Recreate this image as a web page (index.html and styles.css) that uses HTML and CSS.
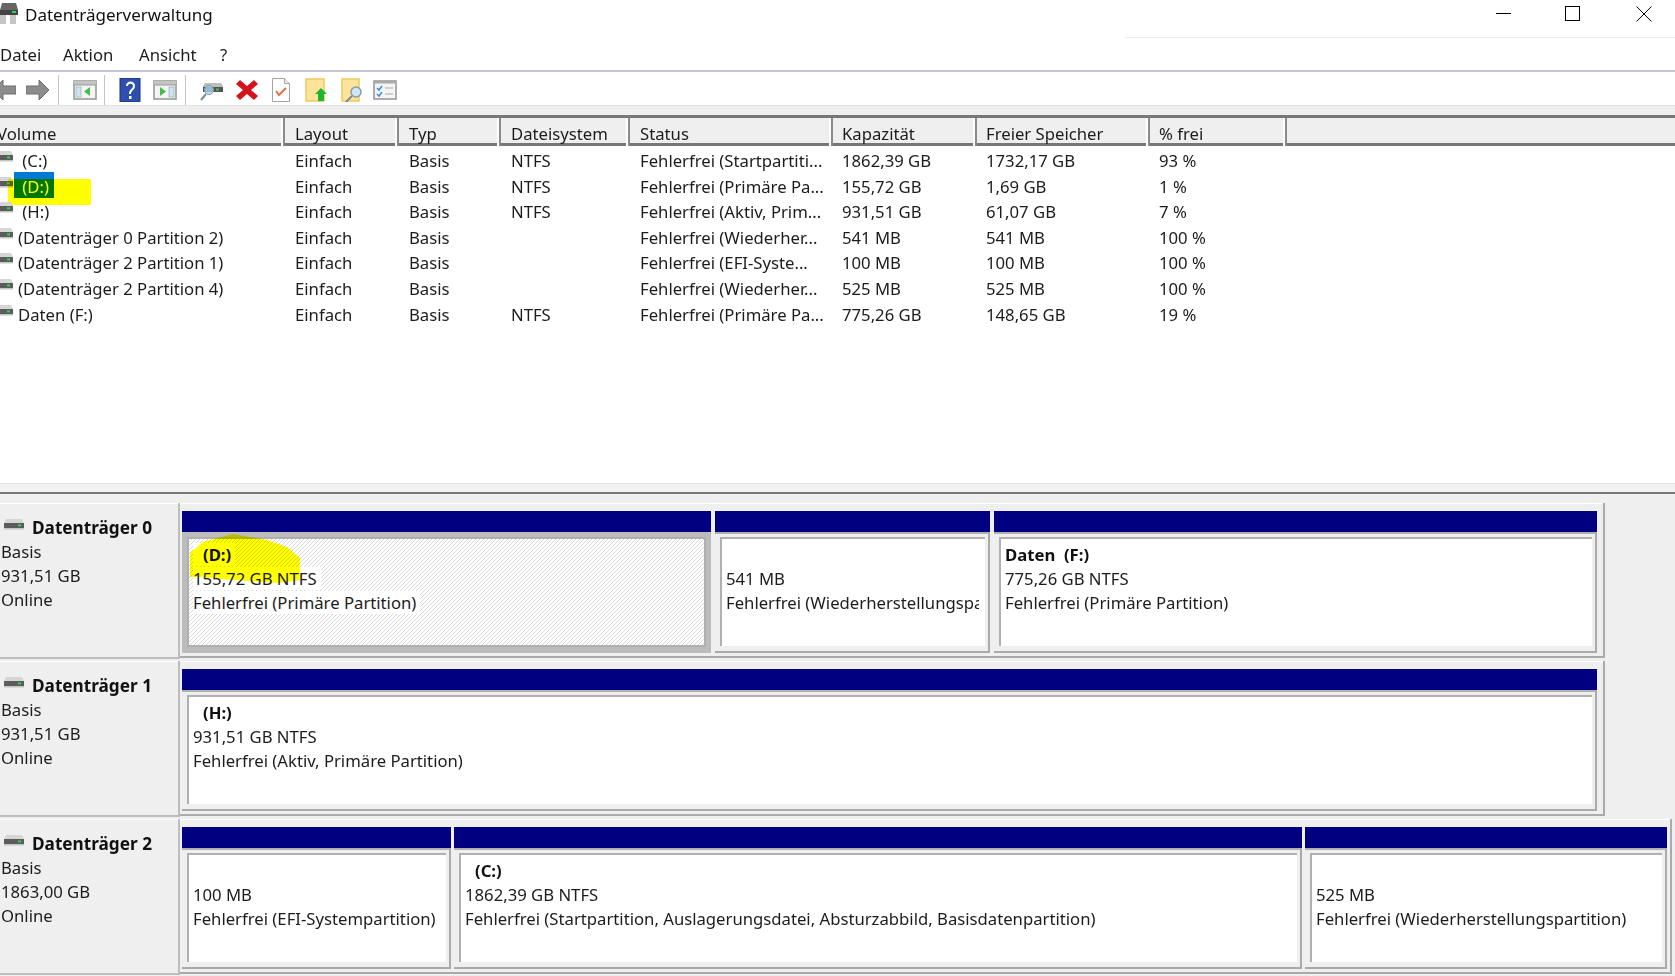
FILE: index.html
```html
<!DOCTYPE html>
<html lang="de">
<head>
<meta charset="utf-8">
<title>Datenträgerverwaltung</title>
<link rel="stylesheet" href="styles.css">
</head>
<body>
<svg class="defs" width="0" height="0">
  <symbol id="drive" viewBox="0 0 20 11">
    <path d="M2 0h16l2 4H0z" fill="#d6d6d6"/>
    <rect x="0" y="4" width="20" height="5" fill="#5c5c5c"/>
    <rect x="0" y="9" width="20" height="1.5" fill="#c4c4c4"/>
    <rect x="14" y="5.4" width="3" height="2" fill="#35d04a"/>
  </symbol>
  <symbol id="panel" viewBox="0 0 24 20">
    <rect x="1" y="1" width="22" height="18" fill="#f4f4f4" stroke="#9a9a9a" stroke-width="1.6"/>
    <rect x="1" y="1" width="22" height="4" fill="#c4c4c4"/>
    <path d="M1 5h22" stroke="#9a9a9a"/>
  </symbol>
</svg>

<header class="titlebar">
  <svg class="app-icon" viewBox="0 0 18 21"><path d="M2 0h14l2 7H0z" fill="#666"/><rect y="7" width="18" height="5" fill="#444"/><rect x="12" y="8" width="4" height="2" fill="#35d04a"/><rect y="12" width="6" height="9" fill="#c4c4c4"/><rect x="10" y="12" width="6" height="9" fill="#c4c4c4"/></svg>
  <span class="title">Datenträgerverwaltung</span>
  <div class="winctl">
    <svg viewBox="0 0 16 16"><path d="M0 7.5h15" stroke="#000" fill="none"/></svg>
    <svg viewBox="0 0 16 16"><rect x=".5" y=".5" width="14" height="14" stroke="#000" fill="none"/></svg>
    <svg viewBox="0 0 16 16"><path d="M.5.5l15 15M15.500.5l-15 15" stroke="#000" fill="none"/></svg>
  </div>
</header>

<nav class="menubar">
  <span>Datei</span><span>Aktion</span><span>Ansicht</span><span>?</span>
</nav>

<div class="toolbar">
  <svg viewBox="0 0 24 22"><path d="M11 1L1 11l10 10v-6h13V7H11z" fill="#8c8c8c" stroke="#6e6e6e"/></svg>
  <svg viewBox="0 0 24 22"><path d="M13 1l10 10-10 10v-6H0V7h13z" fill="#8c8c8c" stroke="#6e6e6e"/></svg>
  <i class="sep"></i>
  <svg viewBox="0 0 24 20"><use href="#panel"/><rect x="3" y="7" width="5" height="10" fill="#cfe0f2" stroke="#8aa" stroke-width=".6"/><path d="M17 7v9l-6-4.500z" fill="#3fbf4f"/></svg>
  <i class="sep"></i>
  <svg viewBox="0 0 24 24"><rect x="2" y="0" width="20" height="24" fill="#2f4fae"/><rect x="2" y="0" width="20" height="24" fill="none" stroke="#1c2f80"/><path d="M8 8c0-6 9-6 9 0 0 4-4 4-4 8h-2c0-5 4-5 4-8 0-3-5-3-5 0z" fill="#fff"/><rect x="11" y="18" width="2.500" height="3" fill="#fff"/></svg>
  <svg viewBox="0 0 24 20"><use href="#panel"/><rect x="16" y="7" width="5" height="10" fill="#cfe0f2" stroke="#8aa" stroke-width=".6"/><path d="M7 7v9l6-4.500z" fill="#3fbf4f"/></svg>
  <i class="sep"></i>
  <svg viewBox="0 0 24 22"><path d="M5 4h16l2 3v6H3V7z" fill="#bdbdbd"/><rect x="3" y="8" width="20" height="5" fill="#555"/><rect x="16" y="9.500" width="3" height="2" fill="#35d04a"/><circle cx="9" cy="11" r="4.500" fill="#a9d3ef" fill-opacity=".8" stroke="#8a9aa5"/><path d="M6 15l-5 6" stroke="#7a8a9a" stroke-width="2"/></svg>
  <svg viewBox="0 0 24 22"><path d="M5 1l7 6 7-6 4 4-7 6 7 6-4 4-7-6-7 6-4-4 7-6-7-6z" fill="#d3121c"/></svg>
  <svg viewBox="0 0 24 24"><path d="M3.500.5h12l5 5v18h-17z" fill="#fff" stroke="#a4a4a4"/><path d="M15.500.5v5h5" fill="#eee" stroke="#a4a4a4"/><path d="M7 13l3 4 7-7" fill="none" stroke="#e8703a" stroke-width="2"/></svg>
  <svg viewBox="0 0 24 24"><rect x="2" y="1" width="18" height="22" fill="#fde49a" stroke="#eec95c" stroke-width="1.500"/><path d="M17 10l6 6h-3v7h-6v-7h-3z" fill="#1fb52e"/></svg>
  <svg viewBox="0 0 24 24"><rect x="2" y="1" width="17" height="22" fill="#fde49a" stroke="#eec95c" stroke-width="1.500"/><circle cx="16" cy="14" r="5" fill="#cfe6f5" stroke="#8a9aa5" stroke-width="1.500"/><path d="M12 18l-6 6" stroke="#7a8a9a" stroke-width="2"/></svg>
  <svg viewBox="0 0 24 20"><rect x="1" y="1" width="22" height="18" fill="#f4f4f4" stroke="#9a9a9a" stroke-width="1.600"/><rect x="1" y="1" width="22" height="2.500" fill="#aaa"/><path d="M4 8l2 2 3-4M4 14l2 2 3-4" fill="none" stroke="#3a8fe0" stroke-width="1.500"/><path d="M12 8h8M12 14h8" stroke="#aaa"/></svg>
</div>
<div class="toolgap"></div>

<section class="list">
  <div class="cols head">
    <span class="first">Volume</span><span>Layout</span><span>Typ</span><span>Dateisystem</span><span>Status</span><span>Kapazität</span><span>Freier Speicher</span><span>% frei</span>
  </div>
  <div class="cols row">
    <span class="vol"><svg class="lv-icon"><use href="#drive"/></svg><b class="name"> (C:)</b></span><span>Einfach</span><span>Basis</span><span>NTFS</span><span>Fehlerfrei (Startpartiti...</span><span>1862,39 GB</span><span>1732,17 GB</span><span>93 %</span>
  </div>
  <div class="cols row">
    <span class="vol"><svg class="lv-icon"><use href="#drive"/></svg><b class="name selected"> (D:)</b></span><span>Einfach</span><span>Basis</span><span>NTFS</span><span>Fehlerfrei (Primäre Pa...</span><span>155,72 GB</span><span>1,69 GB</span><span>1 %</span>
    <i class="marker-rect"></i>
  </div>
  <div class="cols row">
    <span class="vol"><svg class="lv-icon"><use href="#drive"/></svg><b class="name"> (H:)</b></span><span>Einfach</span><span>Basis</span><span>NTFS</span><span>Fehlerfrei (Aktiv, Prim...</span><span>931,51 GB</span><span>61,07 GB</span><span>7 %</span>
  </div>
  <div class="cols row">
    <span class="vol"><svg class="lv-icon"><use href="#drive"/></svg><b class="name">(Datenträger 0 Partition 2)</b></span><span>Einfach</span><span>Basis</span><span></span><span>Fehlerfrei (Wiederher...</span><span>541 MB</span><span>541 MB</span><span>100 %</span>
  </div>
  <div class="cols row">
    <span class="vol"><svg class="lv-icon"><use href="#drive"/></svg><b class="name">(Datenträger 2 Partition 1)</b></span><span>Einfach</span><span>Basis</span><span></span><span>Fehlerfrei (EFI-Syste...</span><span>100 MB</span><span>100 MB</span><span>100 %</span>
  </div>
  <div class="cols row">
    <span class="vol"><svg class="lv-icon"><use href="#drive"/></svg><b class="name">(Datenträger 2 Partition 4)</b></span><span>Einfach</span><span>Basis</span><span></span><span>Fehlerfrei (Wiederher...</span><span>525 MB</span><span>525 MB</span><span>100 %</span>
  </div>
  <div class="cols row">
    <span class="vol"><svg class="lv-icon"><use href="#drive"/></svg><b class="name">Daten (F:)</b></span><span>Einfach</span><span>Basis</span><span>NTFS</span><span>Fehlerfrei (Primäre Pa...</span><span>775,26 GB</span><span>148,65 GB</span><span>19 %</span>
  </div>
</section>

<div class="splitter"></div>

<section class="disks">
  <article class="disk">
    <div class="label">
      <div class="label-name"><svg class="dk-icon"><use href="#drive"/></svg><strong>Datenträger 0</strong></div>
      <div>Basis</div><div>931,51 GB</div><div>Online</div>
    </div>
    <div class="frame">
      <div class="part w-d sel">
        <div class="bar"></div>
        <div class="body"><div class="inner hatch">
          <p><strong class="lead">(D:)</strong></p><p><span>155,72 GB NTFS</span></p><p><span>Fehlerfrei (Primäre Partition)</span></p>
        </div></div>
        <svg class="marker-brush" viewBox="0 0 112 52"><path d="M0 44V20L13 9 43 1 77 7 97 14 110 25V47L87 50 43 47 10 44z" fill="#ffff00"/></svg>
      </div>
      <div class="part w-rec">
        <div class="bar"></div>
        <div class="body"><div class="inner">
          <p>&nbsp;</p><p>541 MB</p><p>Fehlerfrei (Wiederherstellungspartition)</p>
        </div></div>
      </div>
      <div class="part grow">
        <div class="bar"></div>
        <div class="body"><div class="inner">
          <p><strong>Daten  (F:)</strong></p><p>775,26 GB NTFS</p><p>Fehlerfrei (Primäre Partition)</p>
        </div></div>
      </div>
    </div>
  </article>

  <article class="disk">
    <div class="label">
      <div class="label-name"><svg class="dk-icon"><use href="#drive"/></svg><strong>Datenträger 1</strong></div>
      <div>Basis</div><div>931,51 GB</div><div>Online</div>
    </div>
    <div class="frame">
      <div class="part grow">
        <div class="bar"></div>
        <div class="body"><div class="inner">
          <p><strong class="lead">(H:)</strong></p><p>931,51 GB NTFS</p><p>Fehlerfrei (Aktiv, Primäre Partition)</p>
        </div></div>
      </div>
    </div>
  </article>

  <article class="disk">
    <div class="label">
      <div class="label-name"><svg class="dk-icon"><use href="#drive"/></svg><strong>Datenträger 2</strong></div>
      <div>Basis</div><div>1863,00 GB</div><div>Online</div>
    </div>
    <div class="frame wide">
      <div class="part w-efi">
        <div class="bar"></div>
        <div class="body"><div class="inner">
          <p>&nbsp;</p><p>100 MB</p><p>Fehlerfrei (EFI-Systempartition)</p>
        </div></div>
      </div>
      <div class="part w-c">
        <div class="bar"></div>
        <div class="body"><div class="inner">
          <p><strong class="lead">(C:)</strong></p><p>1862,39 GB NTFS</p><p>Fehlerfrei (Startpartition, Auslagerungsdatei, Absturzabbild, Basisdatenpartition)</p>
        </div></div>
      </div>
      <div class="part grow">
        <div class="bar"></div>
        <div class="body"><div class="inner">
          <p>&nbsp;</p><p>525 MB</p><p>Fehlerfrei (Wiederherstellungspartition)</p>
        </div></div>
      </div>
    </div>
  </article>
</section>
</body>
</html>
```

FILE: styles.css
```css
* { box-sizing: border-box; }
html, body { margin: 0; height: 976px; overflow: hidden; }
body {
  background: #fff;
  color: #1c1c1c;
  font: 16.700px/24px "Noto Sans", "Open Sans", sans-serif;
  width: 1675px;
}
.defs { position: absolute; }

.titlebar {
  height: 37px;
  display: flex;
  align-items: flex-start;
}
.app-icon { width: 18px; height: 21px; margin-top: 3px; flex: none; }
.title { margin: 3px 0 0 7px; font-size: 17px; line-height: 24px; color: #111; }
.winctl {
  margin-left: auto;
  display: grid;
  grid-template-columns: 69px 71px 39px;
  padding-top: 6px;
  width: 179px;
  height: 37px;
}
.winctl svg { width: 16px; height: 16px; }

.menubar {
  height: 35px;
  display: flex;
  align-items: center;
  padding-top: 2px;
  border-top: 1px solid #fff;
  border-bottom: 2px solid #c3c6d0;
  position: relative;
}
.menubar::before {
  content: "";
  position: absolute;
  left: 1125px;
  right: 0;
  top: -1px;
  height: 1px;
  background: #ececec;
}
.menubar span:nth-child(1) { width: 63px; }
.menubar span:nth-child(2) { width: 76px; }
.menubar span:nth-child(3) { width: 81px; }

.toolbar {
  height: 33px;
  margin-left: -8px;
  padding-top: 2px;
  display: grid;
  grid-template-columns: 34px 32px 15px 31px 14px 35px 32px 15px 35px 34px 35px 36px 33px 24px;
  align-items: center;
  justify-items: start;
}
.toolbar svg { width: 24px; height: 24px; }
.sep { width: 1px; height: 30px; background: #c4c4c4; }
.toolgap { height: 10px; background: #efefef; border-top: 1px solid #e2e2e2; }

.list { height: 368px; }
.cols {
  display: grid;
  grid-template-columns: 285px 114px 102px 129px 203px 144px 173px 137px;
  position: relative;
}
.head {
  height: 31px;
  background: #efefef;
  border-top: 3px solid #777;
  border-bottom: 3px solid #777;
  line-height: 25px;
}
.head span {
  padding: 3px 0 0 10px;
  border-right: 2px solid #8a8a8a;
  box-shadow: inset -2px 0 0 #fff;
}
.head span.first { padding-left: 0; text-indent: -3px; }
.row { height: 25.600px; line-height: 25.600px; padding-top: 2px; }
.row span { padding-left: 10px; white-space: nowrap; overflow: hidden; }
.cols span:nth-child(n+6) { padding-left: 9px; }
.row span.vol { padding-left: 0; display: flex; align-items: flex-start; overflow: visible; }
.lv-icon { width: 20px; height: 11px; margin: 3px 0 0 -7px; flex: none; }
.name { font-weight: 400; white-space: pre; margin-left: 5px; line-height: 25.600px; }
.selected {
  background: #0078d7;
  color: #fff;
  margin-left: 1px;
  padding: 2px 5px 0 4px;
  height: 26px;
  margin-top: -2px;
}
.marker-rect {
  position: absolute;
  left: 8px;
  top: 7px;
  width: 83px;
  height: 26px;
  background: #ffff00;
  mix-blend-mode: multiply;
}

.splitter {
  height: 11px;
  background: #f2f2f2;
  border-top: 1px solid #e6e6e6;
  border-bottom: 2px solid #777;
}

.disks {
  height: 482px;
  background: #efefef;
  padding-top: 9px;
}
.disk {
  height: 158px;
  display: grid;
  grid-template-columns: 180px 1fr;
}
.label {
  height: 156px;
  padding: 14px 0 0 1px;
  border-right: 2px solid #bdbdbd;
  border-bottom: 2px solid #bdbdbd;
  box-shadow: inset 0 1px 0 #fff;
  margin-bottom: 2px;
}
.label-name { height: 23px; display: flex; align-items: center; }
.dk-icon { width: 20px; height: 11px; margin: -8px 8px 0 3px; flex: none; }
.label strong { font-weight: 700; font-size: 17.200px; color: #111; margin-top: -1px; }

.frame {
  width: 1425px;
  height: 155px;
  padding: 8px 6px 0 2px;
  display: flex;
  gap: 4px;
  border-right: 2px solid #aaa;
  border-bottom: 2px solid #aaa;
  box-shadow: inset 0 1px 0 #fff;
}
.frame.wide { width: 1492px; padding-right: 3px; gap: 3px; }

.part { display: flex; flex-direction: column; position: relative; min-width: 0; }
.w-d { width: 529px; }
.w-rec { width: 275px; }
.w-efi { width: 269px; }
.w-c { width: 848px; }
.grow { flex: 1; }

.bar { height: 21px; flex: none; background: #000080; }
.body {
  height: 121px;
  background: #efefef;
  border-top: 2px solid #b0b0b0;
  border-right: 2px solid #aaa;
  border-bottom: 2px solid #aaa;
  padding: 3px 3px 5px 5px;
  overflow: hidden;
}
.sel .body {
  background: #bcbcbc;
  border-color: #bcbcbc;
  padding: 3px 3px 4px 5px;
}
.inner {
  height: 100%;
  background: #fff;
  border-top: 2px solid #b0b0b0;
  border-left: 2px solid #b0b0b0;
  padding: 4px 6px 0 4px;
  overflow: hidden;
}
.inner p { margin: 0; white-space: pre; height: 24px; overflow: hidden; }
.inner strong { font-weight: 700; color: #111; }
.inner .lead { padding-left: 10px; }
.hatch {
  background: repeating-linear-gradient(135deg, #fff 0 1.900px, #d6d6d6 1.900px 2.8284px);
  border-bottom: 2px solid #b0b0b0;
  border-right: 2px solid #b0b0b0;
}
.hatch span, .hatch strong { background: #fff; padding-right: 4px; }
.marker-brush {
  position: absolute;
  left: 8px;
  top: 22px;
  width: 112px;
  height: 52px;
  mix-blend-mode: multiply;
}
```
